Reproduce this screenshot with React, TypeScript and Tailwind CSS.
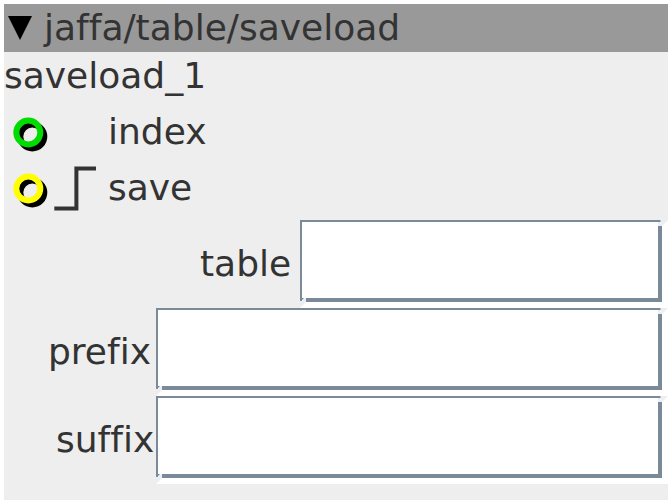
import React from "react";

interface PortProps {
  color: string;
  name: string;
  trigger?: boolean;
}

interface FieldProps {
  name: string;
  labelClass: string;
}

const Port = ({ color, name, trigger }: PortProps) => {
  return (
    <div className="flex h-14 items-center">
      <svg width="104" height="56" viewBox="0 0 104 56" className="shrink-0">
        <circle cx="28.3" cy="32.5" r="12" fill="none" stroke="#000" strokeWidth="6" />
        <circle cx="24.3" cy="28.5" r="12" fill="none" stroke={color} strokeWidth="6" />
        {trigger && (
          <path d="M50.3 48.4H72.4V8.6H92" fill="none" stroke="#333" strokeWidth="4" />
        )}
      </svg>
      <span>{name}</span>
    </div>
  );
};

const Field = ({ name, labelClass }: FieldProps) => {
  return (
    <div className="flex h-[88px] items-center">
      <label htmlFor={name} className={`shrink-0 ${labelClass}`}>
        {name}
      </label>
      <div className="relative h-full flex-1 bg-white pr-1.5 pb-1.5">
        <div className="h-full border-t-2 border-r-4 border-b-4 border-l-2 border-[#7a8a99]">
          <input id={name} className="block h-full w-full bg-white px-1 outline-none" />
        </div>
        {/* bevel corners */}
        <svg width="10" height="10" className="absolute top-0 right-0">
          <path d="M2.5 0H10L4 6H0V2H2.5Z" fill="#eee" />
          <path d="M2 3H3V4H2Z" fill="#fff" />
        </svg>
        <svg width="10" height="10" className="absolute bottom-0 left-0">
          <path d="M0 3H2V2L4 0H6V4L0 10Z" fill="#eee" />
          <path d="M2 2H3V3H2Z" fill="#fff" />
        </svg>
      </div>
    </div>
  );
};

const App = () => {
  return (
    <div className="h-[504px] w-[672px] bg-white p-1">
      <div className="h-full overflow-hidden bg-[#eee] font-['DejaVu_Sans',sans-serif] text-4xl text-[#333] [font-variant-ligatures:none]">
        <div className="flex h-12 items-center bg-[#999] leading-[48px]">
          <svg width="40" height="48" className="shrink-0">
            <polygon points="4,12 28,12 16,36" fill="#000" />
          </svg>
          <span>jaffa/table/saveload</span>
        </div>
        <div className="mb-1 h-12 leading-[48px]">saveload_1</div>
        <Port color="#00dc00" name="index" />
        <Port color="#ffff00" name="save" trigger />
        <div className="mt-1">
          <Field name="table" labelClass="w-[296px] pl-[196px]" />
          <Field name="prefix" labelClass="w-[152px] pl-11" />
          <Field name="suffix" labelClass="w-[152px] pl-[52px]" />
        </div>
      </div>
    </div>
  );
};

export default App;
